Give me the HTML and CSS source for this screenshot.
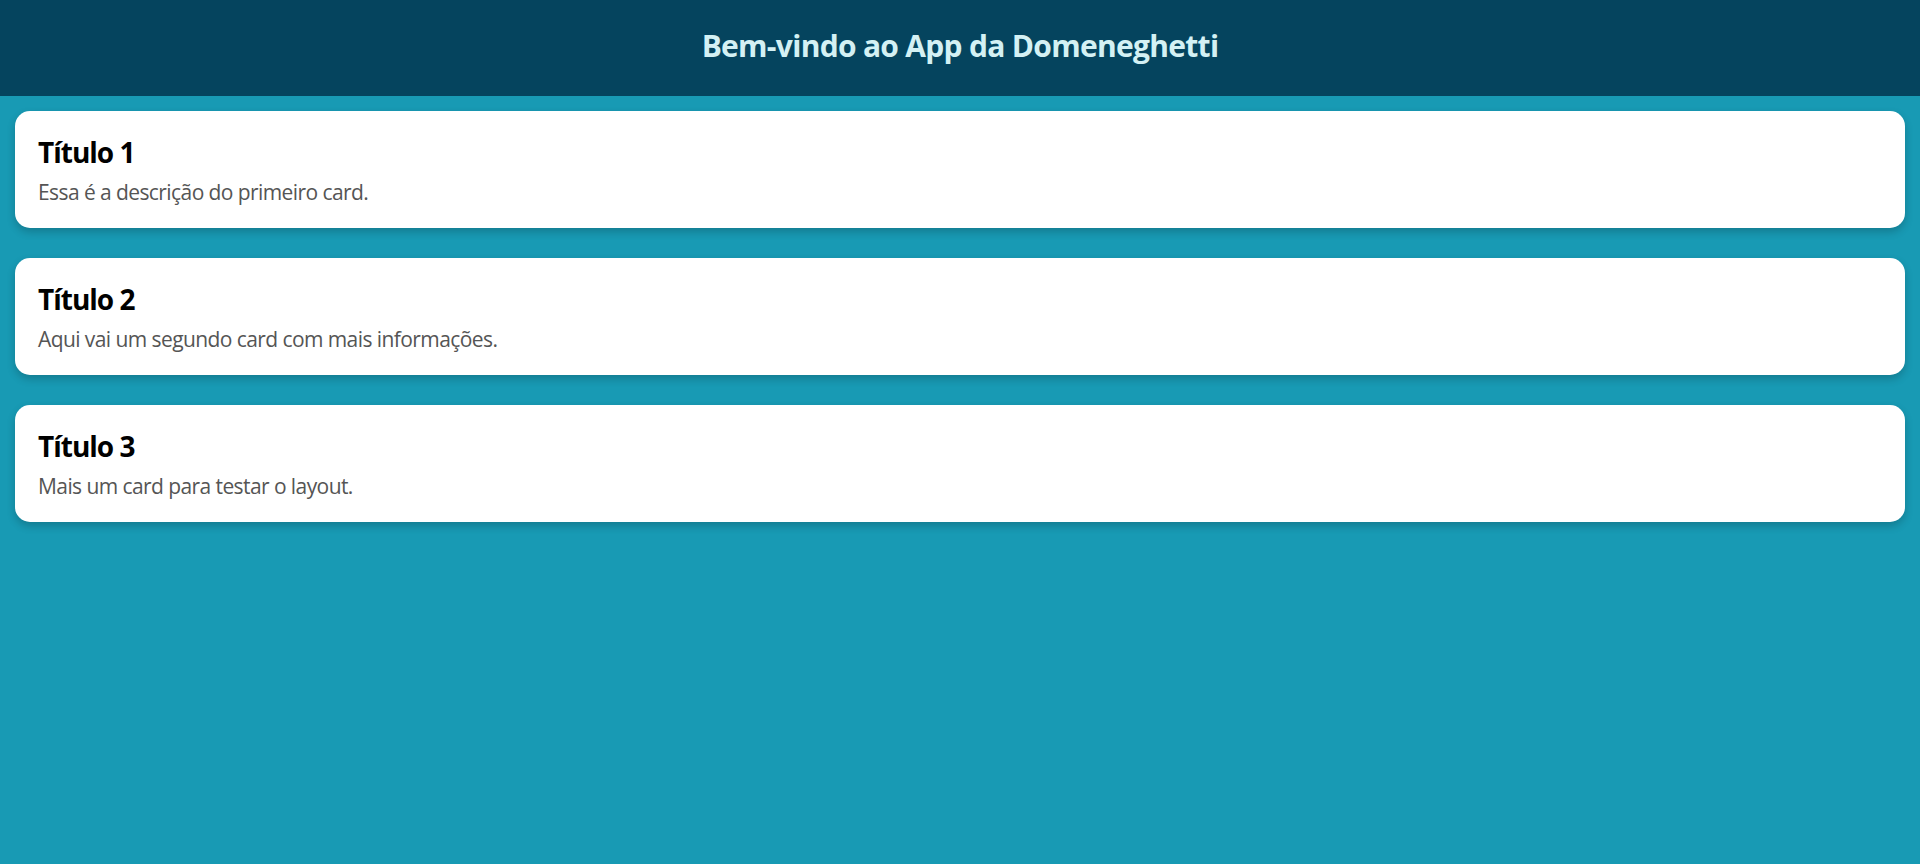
FILE: index.html
```html
<!DOCTYPE html>
<html lang="pt-BR">
<head>
<meta charset="utf-8">
<title>App da Domeneghetti</title>
<link rel="stylesheet" href="styles.css">
</head>
<body>
<header class="topbar">
  <h1 class="topbar-title">Bem-vindo ao App da Domeneghetti</h1>
</header>
<main class="cards">
  <section class="card">
    <h2 class="card-title">Título 1</h2>
    <p class="card-text">Essa é a descrição do primeiro card.</p>
  </section>
  <section class="card">
    <h2 class="card-title">Título 2</h2>
    <p class="card-text">Aqui vai um segundo card com mais informações.</p>
  </section>
  <section class="card">
    <h2 class="card-title">Título 3</h2>
    <p class="card-text">Mais um card para testar o layout.</p>
  </section>
</main>
</body>
</html>
```

FILE: styles.css
```css
* { box-sizing: border-box; }
html, body { margin: 0; padding: 0; }
body {
  background: #189ab4;
  font-family: "Open Sans", "Noto Sans", sans-serif;
  min-height: 100vh;
}
.topbar {
  background: #05445e;
  height: 96px;
  padding-bottom: 4px;
  display: flex;
  align-items: center;
  justify-content: center;
}
.topbar-title {
  margin: 0;
  color: #d4f1f4;
  font-size: 30px;
  line-height: 40px;
  font-weight: 700;
  letter-spacing: -0.7px;
}
.cards {
  display: flex;
  flex-direction: column;
  gap: 30px;
  padding: 15px;
}
.card {
  background: #fff;
  border-radius: 15px;
  box-shadow: 0 4px 8px rgba(0, 0, 0, 0.2);
  height: 117px;
  padding: 24px 23px 0;
}
.card-title {
  margin: 0;
  font-size: 28px;
  line-height: 34px;
  font-weight: 700;
  color: #000;
  letter-spacing: -1px;
}
.card-text {
  margin: 9px 0 0;
  font-size: 21px;
  line-height: 28px;
  color: #555;
  letter-spacing: -0.58px;
}
```
